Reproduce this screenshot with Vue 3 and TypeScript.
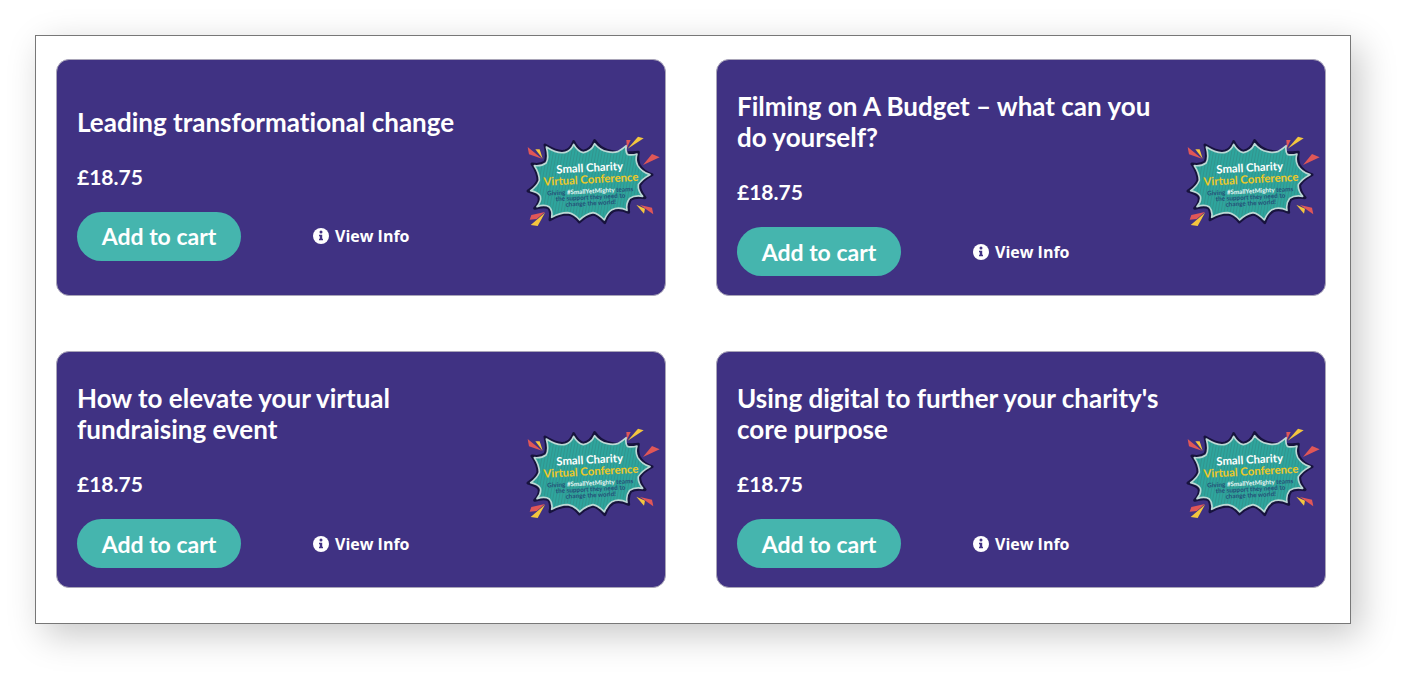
<script setup lang="ts">
interface Session {
  id: number
  title: string
  price: string
}

const sessions: Session[] = [
  { id: 1, title: 'Leading transformational change', price: '£18.75' },
  { id: 2, title: 'Filming on A Budget – what can you do yourself?', price: '£18.75' },
  { id: 3, title: 'How to elevate your virtual fundraising event', price: '£18.75' },
  { id: 4, title: "Using digital to further your charity's core purpose", price: '£18.75' },
]
</script>

<template>
  <main class="panel">
    <article v-for="session in sessions" :key="session.id" class="card">
      <div class="details">
        <h2 class="title">{{ session.title }}</h2>
        <p class="price">{{ session.price }}</p>
        <div class="actions">
          <button type="button" class="add">Add to cart</button>
          <a href="#" class="info">
            <svg class="info-icon" viewBox="0 0 16 16" aria-hidden="true">
              <circle cx="8" cy="8" r="8" fill="#fff" />
              <circle cx="8" cy="4" r="1.5" fill="#403283" />
              <path d="M6 6.7h3.2v4.1H10v1.5H6v-1.5h.8V8.2H6z" fill="#403283" />
            </svg>
            <span>View Info</span>
          </a>
        </div>
      </div>
      <svg class="badge" viewBox="33 30 405 279" role="img" aria-label="Small Charity Virtual Conference">
        <defs>
          <pattern id="stripes" width="9" height="9" patternUnits="userSpaceOnUse" patternTransform="rotate(10)">
            <rect width="9" height="9" fill="#2ea59d" />
            <rect width="3" height="9" fill="#31958e" />
          </pattern>
        </defs>
        <path
          d="M90 60 Q130 84 151 78 Q168 72 176 50 Q188 74 205 79 Q228 75 239 47 Q255 70 277 76 Q310 87 370 82 Q366 103 372 119 Q384 140 411 149 Q384 163 374 180 Q373 197 390 218 Q361 214 347 223 Q337 236 341 262 Q312 249 294 258 Q278 268 269 293 Q250 270 234 267 Q211 273 193 291 Q178 270 158 267 Q135 267 105 284 Q110 260 101 249 Q88 241 59 250 Q76 231 72 216 Q66 205 39 198 Q63 183 69 166 Q69 143 51 117 Q76 121 89 112 Q99 98 90 60Z"
          fill="url(#stripes)" stroke="#17133d" stroke-width="9" stroke-linejoin="round" />
        <path
          d="M94 66 Q129 88 151 82 Q168 77 176 58 Q188 79 205 83 Q229 79 239 56 Q255 76 277 80 Q294 84 308 80 Q320 74 334 62 Q330 76 337 88 Q350 92 366 87 Q360 105 368 121 Q380 141 405 149 Q380 162 370 179 Q368 197 383 214 Q359 210 344 220 Q332 236 336 256 Q312 244 291 254 Q276 264 268 285 Q250 266 234 263 Q211 268 194 285 Q178 266 158 263 Q135 263 110 277 Q114 258 103 246 Q90 237 66 245 Q80 229 76 214 Q70 202 47 197 Q67 183 73 166 Q73 144 58 122 Q80 124 93 114 Q103 99 94 66Z"
          fill="url(#stripes)" stroke="#bcd9d5" stroke-width="5" stroke-linejoin="round" />
        <path d="M38 66 L81 101 L42 88Z" fill="#e05757" />
        <path d="M61 73 L74 73 L83 101Z" fill="#f4c63e" />
        <path d="M334 45 L347 45 L336 68Z" fill="#e05757" />
        <path d="M369 35 L386 40 L338 71Z" fill="#f4c63e" />
        <path d="M411 87 L434 97 L384 120Z" fill="#e05757" />
        <path d="M364 239 L390 251 L387 266Z" fill="#f4c63e" />
        <path d="M375 240 L411 248 L415 268Z" fill="#e05757" />
        <path d="M90 261 L49 270 L44 284 L65 282Z" fill="#e05757" />
        <path d="M90 263 L47 300 L68 303Z" fill="#f4c63e" />
        <g transform="rotate(-3 225 150)" text-anchor="middle">
          <text class="badge-head" x="225" y="140" fill="#fff">Small Charity</text>
          <text class="badge-head" x="227" y="175" fill="#efc927">Virtual Conference</text>
          <g class="badge-small" fill="#245078">
            <text x="223" y="205">Giving <tspan fill="#e8f5f4">#SmallYetMighty</tspan> teams</text>
            <text x="223" y="223">the support they need to</text>
            <text x="223" y="241">change the world!</text>
          </g>
        </g>
      </svg>
    </article>
  </main>
</template>

<style>
body {
  margin: 0;
  background: #fff;
}
</style>

<style scoped>
.panel {
  box-sizing: border-box;
  margin: 35px 54px 54px 35px;
  padding: 23px 24px 35px 20px;
  display: grid;
  grid-template-columns: repeat(2, minmax(0, 1fr));
  gap: 55px 50px;
  border: 1px solid #777;
  background: #fff;
  box-shadow: 9px 11px 34px rgba(0, 0, 0, 0.22);
  font-family: Lato, "Open Sans", sans-serif;
  font-variant-ligatures: none;
  color: #fff;
}

.card {
  box-sizing: border-box;
  min-height: 237px;
  padding: 31px 4px 19px 20px;
  display: flex;
  align-items: center;
  justify-content: space-between;
  border: 1px solid #a9a5b8;
  border-radius: 13px;
  background: #403283;
}

.details {
  flex: 1;
  min-width: 0;
}

.title {
  max-width: 440px;
  margin: 0 0 24px;
  font-size: 26px;
  line-height: 31px;
  font-weight: 700;
}

.price {
  margin: 0 0 20px;
  font-size: 21px;
  line-height: 30px;
  font-weight: 700;
}

.actions {
  display: flex;
  align-items: center;
  gap: 72px;
}

.add {
  width: 164px;
  height: 49px;
  padding: 0;
  border: 0;
  border-radius: 25px;
  background: #45b5ae;
  color: #fff;
  font-family: inherit;
  font-size: 23px;
  font-weight: 700;
}

.info {
  display: flex;
  align-items: center;
  gap: 6px;
  color: #fff;
  font-family: "Open Sans", sans-serif;
  font-size: 16px;
  line-height: 24px;
  font-weight: 700;
  text-decoration: none;
}

.info-icon {
  width: 16px;
  height: 16px;
}

.badge {
  flex: none;
  width: 135px;
  height: 93px;
  margin-bottom: 4px;
}

.badge-head {
  font-size: 34px;
  font-weight: 700;
}

.badge-small {
  font-size: 19px;
  font-weight: 700;
}
</style>
